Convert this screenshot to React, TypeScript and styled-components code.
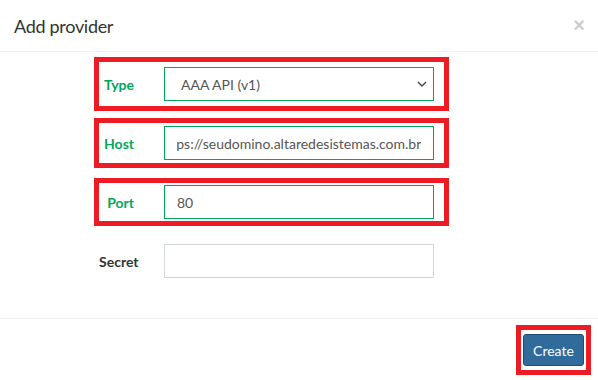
import React from 'react';
import styled, { createGlobalStyle } from 'styled-components';

const GlobalStyle = createGlobalStyle`
    html, body {
        margin: 0;
        padding: 0;
        background: #fff;
    }
    body {
        font-family: Lato, "Open Sans", sans-serif;
        color: #333;
    }
`;

interface Field {
    label: string;
    value: string;
    marked: boolean;
    padY: number;
    kind: 'select' | 'input';
}

const fields: Field[] = [
    { label: 'Type', value: 'AAA API (v1)', marked: true, padY: 5, kind: 'select' },
    { label: 'Host', value: 'https://seudomino.altaredesistemas.com.br', marked: true, padY: 3, kind: 'input' },
    { label: 'Port', value: '80', marked: true, padY: 2, kind: 'input' },
    { label: 'Secret', value: '', marked: false, padY: 5, kind: 'input' },
];

// input scrolled to its end, like after typing in it
const TextField: React.FC<{ marked: boolean; value: string }> = ({ marked, value }) => {
    const ref = React.useRef<HTMLInputElement>(null);
    React.useEffect(() => {
        if (ref.current) ref.current.scrollLeft = ref.current.scrollWidth;
    }, [value]);
    return <Input ref={ref} marked={marked} readOnly value={value} />;
};

const App: React.FC = () => {
    return (
        <>
            <GlobalStyle />
            <Modal>
                <Header>
                    <Title>Add provider</Title>
                    <Close type="button">×</Close>
                </Header>
                <Body>
                    {fields.map((f) => (
                        <Slot key={f.label}>
                            <Group marked={f.marked} padY={f.padY}>
                                <Label marked={f.marked}>{f.label}</Label>
                                {f.kind === 'select' ? (
                                    <SelectBox marked={f.marked}>
                                        <span>{f.value}</span>
                                        <svg width="10" height="6" viewBox="0 0 10 6">
                                            <path d="M1 1l4 4 4-4" fill="none" stroke="#444" strokeWidth="1.4" />
                                        </svg>
                                    </SelectBox>
                                ) : (
                                    <TextField marked={f.marked} value={f.value} />
                                )}
                            </Group>
                        </Slot>
                    ))}
                </Body>
                <Footer>
                    <ButtonMark>
                        <CreateButton type="button">Create</CreateButton>
                    </ButtonMark>
                </Footer>
            </Modal>
        </>
    );
};

export default App;

const Modal = styled.div`
    width: 598px;
    height: 380px;
    background: #fff;
    overflow: hidden;
`

const Header = styled.div`
    height: 52px;
    box-sizing: border-box;
    border-bottom: 1px solid #f0f0f0;
    display: flex;
    align-items: center;
    justify-content: space-between;
    padding: 0 13px 0 14px;
`

const Title = styled.h4`
    margin: 0;
    font-size: 18px;
    font-weight: 400;
    letter-spacing: -0.3px;
    color: #333;
`

const Close = styled.button`
    border: 0;
    background: none;
    padding: 0;
    font-size: 20px;
    font-weight: 700;
    line-height: 1;
    color: #000;
    opacity: 0.2;
    font-family: "Liberation Sans", sans-serif;
    margin-top: -2px;
`

const Body = styled.div`
    padding: 5px 0 30px 94px;
    display: flex;
    flex-direction: column;
    gap: 5px;
`

const Slot = styled.div`
    height: 54px;
    display: flex;
    align-items: center;
`

const Group = styled.div<{ marked: boolean; padY: number }>`
    width: 355px;
    box-sizing: border-box;
    border: 5px solid ${(p) => (p.marked ? '#ed1c24' : 'transparent')};
    padding: ${(p) => p.padY}px 10px ${(p) => p.padY}px 0;
    display: flex;
    align-items: center;
`

const Label = styled.label<{ marked: boolean }>`
    width: 65px;
    flex-shrink: 0;
    box-sizing: border-box;
    padding-right: 30px;
    text-align: right;
    font-size: 14px;
    font-weight: 700;
    color: ${(p) => (p.marked ? '#00a65a' : '#333')};
`

const Input = styled.input<{ marked: boolean }>`
    flex: 1;
    min-width: 0;
    height: 34px;
    box-sizing: border-box;
    border: 1px solid ${(p) => (p.marked ? '#00a65a' : '#d2d6de')};
    padding: 6px 12px;
    font-family: Lato, "Open Sans", sans-serif;
    font-size: 14px;
    color: #555;
    outline: none;
    background: #fff;
`

const SelectBox = styled.div<{ marked: boolean }>`
    flex: 1;
    height: 34px;
    box-sizing: border-box;
    border: 1px solid ${(p) => (p.marked ? '#00a65a' : '#d2d6de')};
    padding: 0 6px 0 16px;
    display: flex;
    align-items: center;
    justify-content: space-between;
    font-size: 14px;
    color: #555;
`

const Footer = styled.div`
    border-top: 1px solid #f0f0f0;
    display: flex;
    justify-content: flex-end;
    padding: 6px 7px 0 0;
`

const ButtonMark = styled.div`
    border: 5px solid #ed1c24;
    padding: 4px 2px;
    display: flex;
`

const CreateButton = styled.button`
    width: 61px;
    height: 32px;
    background: #306b9c;
    border: 1px solid #204d74;
    border-radius: 3px;
    color: #fff;
    font-family: Lato, "Open Sans", sans-serif;
    font-size: 14px;
    padding: 0;
`
